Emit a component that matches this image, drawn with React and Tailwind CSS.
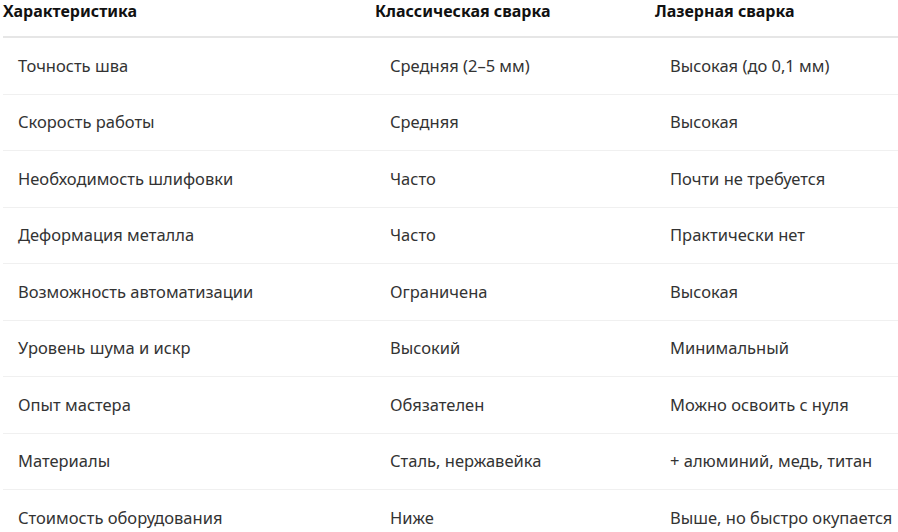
import React from 'react';

const rows = [
  ['Точность шва', 'Средняя (2–5 мм)', 'Высокая (до 0,1 мм)'],
  ['Скорость работы', 'Средняя', 'Высокая'],
  ['Необходимость шлифовки', 'Часто', 'Почти не требуется'],
  ['Деформация металла', 'Часто', 'Практически нет'],
  ['Возможность автоматизации', 'Ограничена', 'Высокая'],
  ['Уровень шума и искр', 'Высокий', 'Минимальный'],
  ['Опыт мастера', 'Обязателен', 'Можно освоить с нуля'],
  ['Материалы', 'Сталь, нержавейка', '+ алюминий, медь, титан'],
  ['Стоимость оборудования', 'Ниже', 'Выше, но быстро окупается'],
];

export default function App() {
  return (
    <div className="min-h-screen bg-white pl-[3px] text-[16.5px] leading-[22px] text-[#333] font-['Noto_Sans',sans-serif]">
      {/* шапка таблицы */}
      <div className="grid grid-cols-[372px_280px_1fr] h-[38px] border-b-2 border-[#e6e6e6] items-start text-[16px] font-bold text-[#111]">
        <div>Характеристика</div>
        <div>Классическая сварка</div>
        <div>Лазерная сварка</div>
      </div>

      {rows.map((r, i) => (
        <div
          key={i}
          className={`grid grid-cols-[372px_280px_1fr] h-[56.5px] items-center ${i < rows.length - 1 ? 'border-b border-[#f0f0f0]' : ''}`}
        >
          <div className="pl-[15px]">{r[0]}</div>
          <div className="pl-[15px]">{r[1]}</div>
          <div className="pl-[15px]">{r[2]}</div>
        </div>
      ))}
    </div>
  );
}
